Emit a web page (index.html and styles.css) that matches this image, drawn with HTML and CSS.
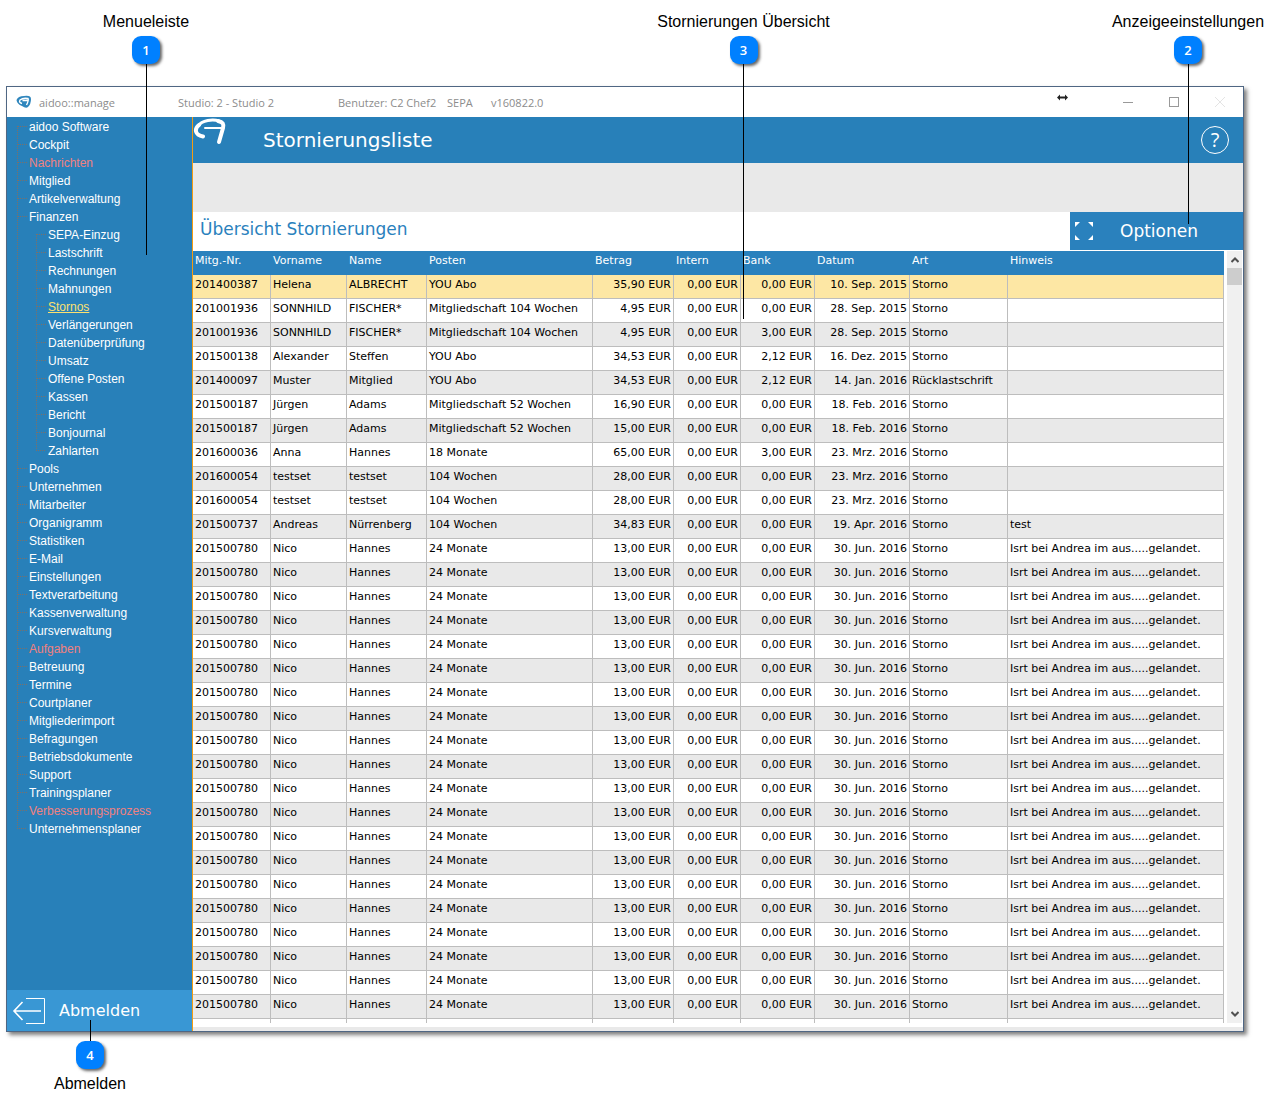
FILE: index.html
```
<!DOCTYPE html>
<html lang="de">
<head>
    <meta charset="UTF-8">
    <meta name="viewport" content="width=device-width, initial-scale=1.0">
    <title>aidoo::manage - Stornierungsliste</title>
    <link rel="stylesheet" href="styles.css">
</head>
<body>

    <div class="window">
        <header class="titlebar">
            <svg class="app-icon" viewBox="0 0 16 14" width="16" height="14">
                <path d="M0.5 5 Q2 1 8 1 Q15 0 15 4 Q15 9 12 12 Q10 14 6 11 Q1 9 0.5 5Z" fill="#2f86bd"/>
                <path d="M6 8.5 Q2.5 7.5 4 5 Q7 2.5 12 3.5 Q13 5 10.5 10 M6.5 5.5 L11.5 5.2" fill="none" stroke="#fff" stroke-width="1.4"/>
            </svg>
            <span class="app-name">aidoo::manage</span>
            <span class="studio">Studio: 2 - Studio 2</span>
            <span class="user">Benutzer: C2 Chef2</span>
            <span class="module">SEPA</span>
            <span class="version">v160822.0</span>
            <div class="window-buttons">
                <svg class="resize-cursor" viewBox="0 0 11 7" width="11" height="7">
                    <path d="M0 3.5 L3 0.5 V2.5 H8 V0.5 L11 3.5 L8 6.5 V4.5 H3 V6.5Z" fill="#222"/>
                </svg>
                <button type="button" aria-label="Minimieren">
                    <svg viewBox="0 0 10 10" width="10" height="10"><path d="M0 5.5H10" stroke="#999"/></svg>
                </button>
                <button type="button" aria-label="Maximieren">
                    <svg viewBox="0 0 10 10" width="10" height="10"><rect x="0.5" y="0.5" width="9" height="9" fill="none" stroke="#999"/></svg>
                </button>
                <button type="button" aria-label="Schließen">
                    <svg viewBox="0 0 10 10" width="10" height="10"><path d="M0 0L10 10M10 0L0 10" stroke="#e4e4e4"/></svg>
                </button>
            </div>
        </header>

        <div class="content">
            <nav class="sidebar">
                <ul class="menu" id="menu"></ul>
                <button type="button" class="logout">
                    <svg viewBox="0 0 34 28" width="34" height="28" fill="none" stroke="#fff">
                        <path d="M14 1.5H32.5V26.5H14" stroke-width="1"/>
                        <path d="M29 14H2M10.5 5L2 14L10.5 23" stroke-width="1.6"/>
                    </svg>
                    Abmelden
                </button>
            </nav>

            <main class="main">
                <div class="page-header">
                    <svg class="logo" viewBox="0 0 34 30" width="34" height="30" fill="none" stroke="#fff" stroke-linecap="round">
                        <path d="M10 19.5C2 18 1 12 6 8" stroke-width="4"/>
                        <path d="M5 9C9 3 20 2 26 4" stroke-width="3"/>
                        <path d="M25 4C30 5 31 7 30 11L26 25" stroke-width="4"/>
                        <path d="M12 11H28" stroke-width="2"/>
                    </svg>
                    <h1>Stornierungsliste</h1>
                    <button type="button" class="help" aria-label="Hilfe">?</button>
                </div>
                <div class="toolbar"></div>
                <div class="list-header">
                    <h2>Übersicht Stornierungen</h2>
                    <button type="button" class="options">
                        <svg viewBox="0 0 18 18" width="18" height="18" fill="#fff">
                            <path d="M0 0H5L0 5ZM18 0V5L13 0ZM0 18V13L5 18ZM18 18H13L18 13Z"/>
                        </svg>
                        <span>Optionen</span>
                    </button>
                </div>
                <div class="list">
                    <table>
                        <colgroup>
                            <col class="col-nr">
                            <col class="col-vorname">
                            <col class="col-name">
                            <col class="col-posten">
                            <col class="col-betrag">
                            <col class="col-intern">
                            <col class="col-bank">
                            <col class="col-datum">
                            <col class="col-art">
                            <col>
                        </colgroup>
                        <thead>
                            <tr>
                                <th>Mitg.-Nr.</th>
                                <th>Vorname</th>
                                <th>Name</th>
                                <th>Posten</th>
                                <th>Betrag</th>
                                <th>Intern</th>
                                <th>Bank</th>
                                <th>Datum</th>
                                <th>Art</th>
                                <th>Hinweis</th>
                            </tr>
                        </thead>
                        <tbody id="rows"></tbody>
                    </table>
                    <div class="scrollbar">
                        <svg viewBox="0 0 8 6" width="8" height="6"><path d="M0.5 5L4 1.5L7.5 5" fill="none" stroke="#505050" stroke-width="2"/></svg>
                        <div class="thumb"></div>
                        <svg viewBox="0 0 8 6" width="8" height="6"><path d="M0.5 1L4 4.5L7.5 1" fill="none" stroke="#505050" stroke-width="2"/></svg>
                    </div>
                </div>
            </main>
        </div>
    </div>

    <div class="callout callout-menu"><span class="label">Menueleiste</span><span class="badge">1</span></div>
    <div class="callout callout-list"><span class="label">Stornierungen Übersicht</span><span class="badge">3</span></div>
    <div class="callout callout-options"><span class="label">Anzeigeeinstellungen</span><span class="badge">2</span></div>
    <div class="callout callout-logout"><span class="badge">4</span><span class="label">Abmelden</span></div>

    <script src="script.js"></script>
</body>
</html>
```
FILE: styles.css
```
* {
    box-sizing: border-box;
}

body {
    position: relative;
    margin: 0;
    padding: 86px 37px 77px 6px;
    background-color: #fff;
    font-family: Verdana, "DejaVu Sans", sans-serif;
    font-size: 11px;
    color: #000;
}

button {
    padding: 0;
    border: none;
    background: none;
    color: #fff;
    font-family: inherit;
    cursor: pointer;
}

h1, h2 {
    margin: 0;
    font-weight: normal;
}

svg {
    display: block;
    flex: none;
}

.window {
    border: 1px solid #4f6683;
    box-shadow: 3px 3px 4px rgba(0, 0, 0, 0.5);
}

/* title bar */
.titlebar {
    display: flex;
    align-items: center;
    height: 30px;
    padding-left: 9px;
    font-family: "Segoe UI", "Open Sans", sans-serif;
    font-size: 11px;
    color: #8c8c8c;
    white-space: nowrap;
}

.app-name {
    width: 139px;
    margin-left: 7px;
}

.studio {
    width: 160px;
}

.user {
    width: 109px;
}

.module {
    width: 44px;
}

.window-buttons {
    display: flex;
    align-items: center;
    margin-left: auto;
}

.window-buttons button {
    display: flex;
    justify-content: center;
    width: 46px;
}

.resize-cursor {
    margin: 0 37px 10px 0;
}

.content {
    display: flex;
}

/* menu tree */
.sidebar {
    display: flex;
    flex-direction: column;
    flex: none;
    width: 186px;
    background-color: #2880b9;
    border-right: 1px solid #f39c12;
}

.menu, .menu ul {
    margin: 0;
    padding: 0;
    list-style: none;
}

.menu {
    flex: 1;
    padding: 1px 0 0 10px;
    font-family: Arial, "Liberation Sans", sans-serif;
    font-size: 12px;
    line-height: 18px;
}

.menu li {
    position: relative;
    padding-left: 12px;
}

.menu ul {
    margin-left: 7px;
}

/* dotted branches */
.menu li::before {
    content: "";
    position: absolute;
    left: 0;
    top: 8px;
    width: 9px;
    height: 100%;
    border-top: 1px dotted #7d7068;
    border-left: 1px dotted #7d7068;
}

.menu li:last-child::before {
    height: 1px;
    border-left: none;
}

.menu a {
    color: #fff;
    text-decoration: none;
}

.menu a.alert {
    color: #f08080;
}

.menu a.active {
    color: #fce070;
    text-decoration: underline;
}

.logout {
    display: flex;
    align-items: center;
    gap: 13px;
    height: 41px;
    padding-left: 5px;
    background-color: #3997d4;
    font-size: 16px;
}

/* page */
.main {
    flex: 1;
    min-width: 0;
    border-bottom: 4px solid #e9e9e9;
}

.page-header {
    display: flex;
    align-items: center;
    height: 46px;
    padding-right: 14px;
    background-color: #2880b9;
    color: #fff;
}

.logo {
    align-self: flex-start;
}

.page-header h1 {
    margin-left: 36px;
    font-size: 20px;
}

.help {
    width: 28px;
    height: 28px;
    margin-left: auto;
    border: 1px solid #fff;
    border-radius: 50%;
    font-family: "Segoe UI", "Open Sans", sans-serif;
    font-size: 20px;
    line-height: 26px;
}

.toolbar {
    height: 49px;
    background-color: #e9e9e9;
}

.list-header {
    display: flex;
    justify-content: space-between;
    height: 39px;
}

.list-header h2 {
    padding-left: 7px;
    font-size: 17px;
    line-height: 34px;
    color: #2a81bd;
}

.options {
    display: flex;
    align-items: center;
    gap: 27px;
    width: 173px;
    height: 38px;
    padding-left: 5px;
    background-color: #2a81bd;
    font-size: 17px;
}

/* table */
.list {
    display: flex;
    gap: 3px;
    padding: 0 1px 4px 0;
}

table {
    flex: 1;
    min-width: 0;
    border-collapse: separate;
    border-spacing: 0;
    table-layout: fixed;
}

.col-nr {
    width: 78px;
}

.col-vorname {
    width: 76px;
}

.col-name {
    width: 80px;
}

.col-posten {
    width: 166px;
}

.col-betrag {
    width: 81px;
}

.col-intern {
    width: 67px;
}

.col-bank {
    width: 74px;
}

.col-datum {
    width: 95px;
}

.col-art {
    width: 98px;
}

th, td {
    height: 24px;
    padding: 2px 2px 0;
    line-height: 15px;
    text-align: left;
    vertical-align: top;
    white-space: nowrap;
}

th {
    background-color: #2a81bd;
    color: #fff;
    font-weight: normal;
}

td {
    border-right: 1px solid #bdbdbd;
    border-bottom: 1px solid #bdbdbd;
}

td.number {
    text-align: right;
}

tbody tr:nth-child(odd) {
    background-color: #e9e9e9;
}

tbody tr.selected {
    background-color: #fde7a4;
}

/* start of the next row, cut off by the viewport */
tbody tr.cut {
    background-color: #fff;
}

.cut td {
    height: 4px;
    padding: 0;
    border-bottom: none;
}

.scrollbar {
    display: flex;
    flex-direction: column;
    align-items: center;
    flex: none;
    width: 15px;
    padding: 6px 0;
    background-color: #f0f0f0;
}

.thumb {
    width: 100%;
    height: 17px;
    margin: 5px 0 auto;
    background-color: #cdcdcd;
}

/* numbered callouts on top of the window */
.callout {
    position: absolute;
    top: 12px;
    display: flex;
    flex-direction: column;
    align-items: center;
    width: 200px;
    margin-left: -100px;
    font-family: Arial, "Liberation Sans", sans-serif;
    font-size: 16px;
    line-height: 20px;
    pointer-events: none;
}

.badge {
    width: 28px;
    height: 28px;
    border-radius: 9px;
    background-color: #0080ff;
    box-shadow: 2px 2px 3px rgba(0, 0, 0, 0.6);
    color: #fff;
    font-family: "Segoe UI", "Open Sans", sans-serif;
    font-size: 13px;
    font-weight: 600;
    line-height: 28px;
    text-align: center;
}

.label + .badge {
    margin-top: 4px;
}

.callout::after {
    content: "";
    width: 1px;
    background-color: #000;
}

.callout-menu {
    left: 146px;
}

.callout-menu::after {
    height: 191px;
}

.callout-list {
    left: calc(50% + 103px);
}

.callout-list::after {
    height: 255px;
}

.callout-options {
    left: auto;
    right: -7px;
}

.callout-options::after {
    height: 160px;
}

.callout-logout {
    top: auto;
    bottom: 15px;
    left: 90px;
}

.callout-logout::after {
    order: -1;
    height: 21px;
}

.callout-logout .label {
    margin-top: 5px;
}

/* keep the page from scrolling sideways past the last callout */
html {
    overflow-x: hidden;
}
```
FILE: script.js
```
const menuItems = [
    'aidoo Software', 'Cockpit', 'Nachrichten', 'Mitglied', 'Artikelverwaltung', 'Finanzen',
    'Pools', 'Unternehmen', 'Mitarbeiter', 'Organigramm', 'Statistiken', 'E-Mail',
    'Einstellungen', 'Textverarbeitung', 'Kassenverwaltung', 'Kursverwaltung', 'Aufgaben',
    'Betreuung', 'Termine', 'Courtplaner', 'Mitgliederimport', 'Befragungen',
    'Betriebsdokumente', 'Support', 'Trainingsplaner', 'Verbesserungsprozess', 'Unternehmensplaner'
];
const financeItems = [
    'SEPA-Einzug', 'Lastschrift', 'Rechnungen', 'Mahnungen', 'Stornos', 'Verlängerungen',
    'Datenüberprüfung', 'Umsatz', 'Offene Posten', 'Kassen', 'Bericht', 'Bonjournal', 'Zahlarten'
];
const alerts = ['Nachrichten', 'Aufgaben', 'Verbesserungsprozess'];

function menuLink(name) {
    let cls = '';
    if (alerts.includes(name)) cls = 'alert';
    if (name === 'Stornos') cls = 'active';
    return `<a href="#" class="${cls}">${name}</a>`;
}

document.getElementById('menu').innerHTML = menuItems.map(name => {
    const sub = name === 'Finanzen'
        ? `<ul>${financeItems.map(item => `<li>${menuLink(item)}</li>`).join('')}</ul>`
        : '';
    return `<li>${menuLink(name)}${sub}</li>`;
}).join('');

// Nr, Vorname, Name, Posten, Betrag, Intern, Bank, Datum, Art, Hinweis
const rows = [
    ['201400387', 'Helena', 'ALBRECHT', 'YOU Abo', '35,90', '0,00', '0,00', '10. Sep. 2015', 'Storno', ''],
    ['201001936', 'SONNHILD', 'FISCHER*', 'Mitgliedschaft 104 Wochen', '4,95', '0,00', '0,00', '28. Sep. 2015', 'Storno', ''],
    ['201001936', 'SONNHILD', 'FISCHER*', 'Mitgliedschaft 104 Wochen', '4,95', '0,00', '3,00', '28. Sep. 2015', 'Storno', ''],
    ['201500138', 'Alexander', 'Steffen', 'YOU Abo', '34,53', '0,00', '2,12', '16. Dez. 2015', 'Storno', ''],
    ['201400097', 'Muster', 'Mitglied', 'YOU Abo', '34,53', '0,00', '2,12', '14. Jan. 2016', 'Rücklastschrift', ''],
    ['201500187', 'Jürgen', 'Adams', 'Mitgliedschaft 52 Wochen', '16,90', '0,00', '0,00', '18. Feb. 2016', 'Storno', ''],
    ['201500187', 'Jürgen', 'Adams', 'Mitgliedschaft 52 Wochen', '15,00', '0,00', '0,00', '18. Feb. 2016', 'Storno', ''],
    ['201600036', 'Anna', 'Hannes', '18 Monate', '65,00', '0,00', '3,00', '23. Mrz. 2016', 'Storno', ''],
    ['201600054', 'testset', 'testset', '104 Wochen', '28,00', '0,00', '0,00', '23. Mrz. 2016', 'Storno', ''],
    ['201600054', 'testset', 'testset', '104 Wochen', '28,00', '0,00', '0,00', '23. Mrz. 2016', 'Storno', ''],
    ['201500737', 'Andreas', 'Nürrenberg', '104 Wochen', '34,83', '0,00', '0,00', '19. Apr. 2016', 'Storno', 'test']
];
for (let i = 0; i < 20; i++) {
    rows.push(['201500780', 'Nico', 'Hannes', '24 Monate', '13,00', '0,00', '0,00', '30. Jun. 2016', 'Storno', 'Isrt bei Andrea im aus.....gelandet.']);
}

const rowsHtml = rows.map((row, index) => {
    const cells = row.map((value, col) => {
        if (col >= 4 && col <= 6) return `<td class="number">${value} EUR</td>`;
        if (col === 7) return `<td class="number">${value}</td>`;
        return `<td>${value}</td>`;
    }).join('');
    return `<tr class="${index === 0 ? 'selected' : ''}">${cells}</tr>`;
}).join('');

document.getElementById('rows').innerHTML = rowsHtml + `<tr class="cut">${'<td></td>'.repeat(10)}</tr>`;
```
